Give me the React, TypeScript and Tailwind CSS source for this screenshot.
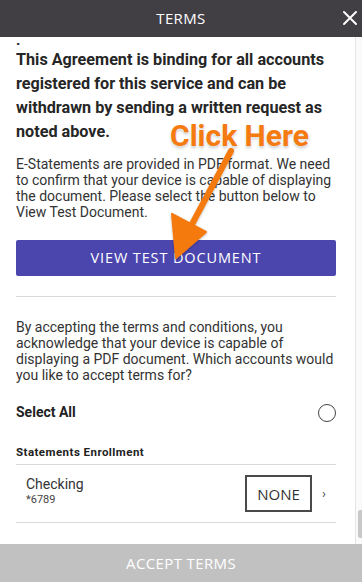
import React from 'react';

const body = { fontFamily: 'Roboto, "Liberation Sans", sans-serif' };
const caps = { fontFamily: '"Open Sans", "Liberation Sans", sans-serif' };

function ClickHere() {
  return (
    <div className="pointer-events-none absolute left-0 top-0 h-full w-full">
      <div
        className="absolute left-[170px] top-[121px] text-[30px] font-bold leading-none text-[#f57a0f]"
        style={{ ...body, textShadow: '0 0 4px rgba(255,255,255,0.9), 0 2px 3px rgba(0,0,0,0.25)' }}
      >
        Click Here
      </div>
      <svg className="absolute left-0 top-0" width="362" height="582" viewBox="0 0 362 582">
        <defs>
          <filter id="sh" x="-20%" y="-20%" width="140%" height="140%">
            <feDropShadow dx="0" dy="1" stdDeviation="1.2" floodColor="#000" floodOpacity="0.3" />
          </filter>
        </defs>
        <g filter="url(#sh)" fill="#f57a0f" stroke="#f57a0f" strokeLinejoin="round">
          <line x1="231" y1="151" x2="190" y2="228" strokeWidth="6" strokeLinecap="round" />
          <polygon points="176,258 172,214 206,232" strokeWidth="2" />
        </g>
      </svg>
    </div>
  );
}

export default function App() {
  return (
    <div className="relative flex h-[582px] w-[362px] flex-col overflow-hidden bg-white" style={body}>
      <div className="relative z-10 flex h-[37px] shrink-0 items-center justify-center bg-[#413e44]">
        <span className="text-[15px] tracking-wide text-white" style={caps}>TERMS</span>
        <svg className="absolute right-[4px] top-[10px]" width="16" height="16" viewBox="0 0 16 16">
          <path d="M2 2 L14 14 M14 2 L2 14" stroke="#fff" strokeWidth="2" strokeLinecap="round" />
        </svg>
      </div>

      <div className="flex min-h-0 flex-1">
        <div className="flex-1 pl-4 pr-[19px] text-[#222]">
          <div className="-mt-[4px] text-[15px] leading-[14px] font-bold">.</div>
          <p className="mt-[1px] text-[16.2px] font-bold leading-6 text-[#262626]">
            This Agreement is binding for all accounts registered for this service and can be withdrawn by sending a written request as noted above.
          </p>
          <p className="mt-[12px] text-[14px] leading-4 text-[#333]">
            E-Statements are provided in PDF format. We need
            <br />
            to confirm that your device is capable of displaying
            <br />
            the document. Please select the button below to
            <br />
            View Test Document.
          </p>
          <button
            className="mt-[20px] flex h-[36px] w-full items-center justify-center rounded-[2px] bg-[#4b45ae] text-[14.5px] tracking-[0.06em] text-white"
            style={caps}
          >
            VIEW TEST DOCUMENT
          </button>
          <div className="mt-[20px] h-px bg-[#d9d9d9]" />
          <p className="mt-[22px] text-[14px] leading-4 text-[#333]">
            By accepting the terms and conditions, you acknowledge that your device is capable of displaying a PDF document. Which accounts would you like to accept terms for?
          </p>
          <div className="mt-[19px] flex items-center justify-between">
            <span className="text-[14px] font-bold text-[#222]">Select All</span>
            <span className="h-[18px] w-[18px] rounded-full border border-[#444]" />
          </div>
          <div className="mt-[21px] text-[11.5px] font-bold tracking-[0.04em] text-[#222]">Statements Enrollment</div>
          <div className="mt-[3px] h-px bg-[#d9d9d9]" />
          <div className="flex h-[57px] items-center justify-between pl-[10px]">
            <div className="mb-[6px]">
              <div className="text-[14px] leading-4 text-[#333]">Checking</div>
              <div className="mt-[2px] text-[11px] leading-3 text-[#444]">*6789</div>
            </div>
            <div className="flex items-center">
              <span
                className="flex h-[37px] w-[67px] items-center justify-center border-2 border-[#4a4a4a] text-[15px] text-[#333]"
                style={caps}
              >
                NONE
              </span>
              <span className="ml-[10px] mr-[10px] text-[13px] text-[#444]">›</span>
            </div>
          </div>
          <div className="h-px bg-[#d9d9d9]" />
        </div>
        <div className="relative w-[7px] border-l border-[#e5e5e5] bg-[#fafafa]">
          <div className="absolute bottom-[6px] right-0 h-[28px] w-[4px] rounded-l-[2px] bg-[#c8c8c8]" />
        </div>
      </div>

      <div className="flex h-[38px] shrink-0 items-center justify-center bg-[#c1c1c1]">
        <span className="text-[15px] tracking-wide text-white" style={caps}>ACCEPT TERMS</span>
      </div>

      <ClickHere />
    </div>
  );
}
